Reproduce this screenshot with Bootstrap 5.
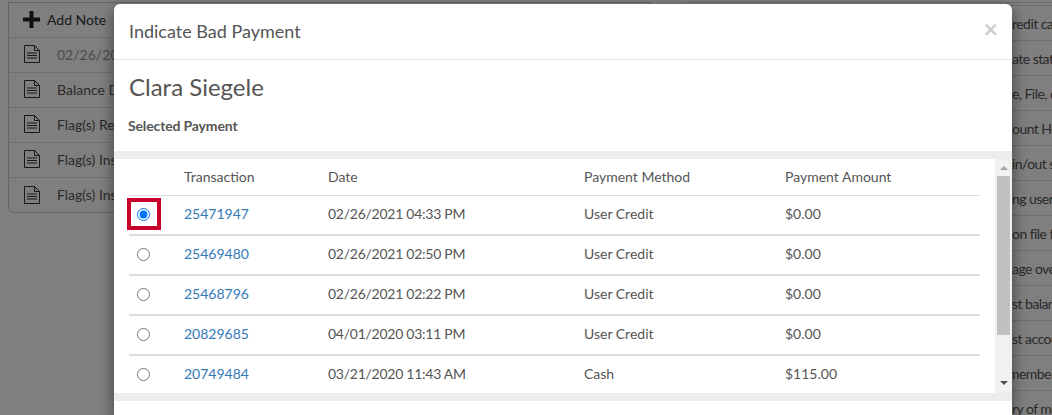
<!DOCTYPE html>
<html lang="en">
<head>
<meta charset="utf-8">
<title>Indicate Bad Payment</title>
<link href="https://cdn.jsdelivr.net/npm/bootstrap@5.3.0/dist/css/bootstrap.min.css" rel="stylesheet">
<style>
html,body{height:415px;overflow:hidden}
body{background:#fff;font-family:"Lato",sans-serif;color:#555;font-size:14px;position:relative}
.page-wrap{height:415px;overflow:hidden}
.note-panel{width:643px;flex:none;height:211px;margin:2px 0 0 8px;border:1px solid #ccc;border-radius:0 0 6px 6px}
.note-row{height:35px;border-bottom:1px solid #ddd;padding-left:15px;padding-bottom:2px;color:#555;font-size:14px;gap:17px}
.note-row:last-child{border-bottom:0}
.note-add{color:#333;gap:7px;padding-left:14px;padding-bottom:1px}
.note-date{color:#999}
.task-panel{margin:2px 0 0 32px;flex:1;border-left:1px solid #ddd;border-top:1px solid #ddd;min-width:0}
.task-first{height:3px;border-bottom:1px solid #ddd}
.task-row{height:35px;border-bottom:1px solid #ddd;color:#555;font-size:14px;letter-spacing:-.55px;white-space:nowrap;overflow:hidden;padding-left:268px}
.hidden-bit{display:inline-block;width:60px;text-align:right;flex:none}
.hidden-long{width:56px}
.backdrop-layer{position:absolute;inset:0;background:#000;opacity:.5}
.dialog-box{position:absolute;left:114px;top:4px;width:898px;bottom:0;background:#fff;border-radius:6px 6px 0 0;box-shadow:0 5px 15px rgba(0,0,0,.5);overflow:hidden}
.dialog-head{height:56px;border-bottom:1px solid #e5e5e5;padding:0 14px 0 15px;color:#555}
.dialog-title{font-size:18px;font-weight:400;margin:0;line-height:22px;padding-bottom:2px}
.dialog-x{font-size:25px;font-weight:700;color:#ccc;line-height:1;padding-bottom:6px}
.client-name{font-size:24px;font-weight:400;margin:0;padding:12px 15px 0;line-height:29px;color:#555}
.sel-label{font-size:14px;font-weight:700;padding:0 14px;margin:16px 0 0;line-height:17px;color:#555;letter-spacing:-.14px}
.scroll-band{margin-top:17px;background:#ececec;padding:8px 0;height:250px}
.scroll-inner{height:234px;background:#fff;overflow:hidden}
.table-side{flex:1;background:#fff;padding:0 15px}
.pay-head{height:37px;border-bottom:1px solid #ddd;color:#555}
.pay-row{height:40px;border-bottom:2px solid #ddd;padding-bottom:2px;color:#555}
.pay-row:last-child{border-bottom-color:transparent}
.c1{width:55px;flex:none}.c2{width:144px;flex:none}.c3{width:256px;flex:none}.c4{width:201px;flex:none}.c5{flex:1}
.c2,.c3,.c4,.c5{padding-bottom:2px}
.date-cell{letter-spacing:-.26px}
.pay-link{color:#337ab7;text-decoration:none}
.pay-radio{appearance:auto;width:13px;height:13px;margin:0;display:block}
.radio-slot{position:relative;width:13px;height:13px;margin-left:8px}
.radio-flag{position:absolute;left:-10px;top:-10px;width:34px;height:32px;border:4px solid #c8002b;pointer-events:none}
.scroll-track{width:17px;background:#f1f1f1;flex:none}
.scroll-thumb{background:#c1c1c1;height:159px;margin:6px 2px 0}
.arrow-up,.arrow-down{width:0;height:0;border-left:4px solid transparent;border-right:4px solid transparent;margin:0 auto}
.arrow-up{border-bottom:4px solid #a3a3a3;margin-top:7px}
.arrow-down{border-top:4px solid #505050;margin-top:auto;margin-bottom:8px}
</style>
</head>
<body>
<div class="page-wrap d-flex">
  <div class="note-panel">
    <div class="note-row note-add d-flex align-items-center">
      <svg width="17" height="17" viewBox="0 0 17 17"><path d="M6.5 0h4v6.5H17v4h-6.5V17h-4v-6.5H0v-4h6.5z" fill="#222"/></svg>
      <span>Add Note</span>
    </div>
    <div class="note-row d-flex align-items-center"><svg width="16" height="18" viewBox="0 0 16 18"><path d="M.5.5h10l5 5v12H.5zM10.5.5v5h5" fill="none" stroke="#333"/><path d="M3 8h10M3 10.5h10M3 13h10" stroke="#333"/></svg><span class="note-date">02/26/2021</span></div>
    <div class="note-row d-flex align-items-center"><svg width="16" height="18" viewBox="0 0 16 18"><path d="M.5.5h10l5 5v12H.5zM10.5.5v5h5" fill="none" stroke="#333"/><path d="M3 8h10M3 10.5h10M3 13h10" stroke="#333"/></svg><span>Balance Due</span></div>
    <div class="note-row d-flex align-items-center"><svg width="16" height="18" viewBox="0 0 16 18"><path d="M.5.5h10l5 5v12H.5zM10.5.5v5h5" fill="none" stroke="#333"/><path d="M3 8h10M3 10.5h10M3 13h10" stroke="#333"/></svg><span>Flag(s) Removed</span></div>
    <div class="note-row d-flex align-items-center"><svg width="16" height="18" viewBox="0 0 16 18"><path d="M.5.5h10l5 5v12H.5zM10.5.5v5h5" fill="none" stroke="#333"/><path d="M3 8h10M3 10.5h10M3 13h10" stroke="#333"/></svg><span>Flag(s) Inserted</span></div>
    <div class="note-row d-flex align-items-center"><svg width="16" height="18" viewBox="0 0 16 18"><path d="M.5.5h10l5 5v12H.5zM10.5.5v5h5" fill="none" stroke="#333"/><path d="M3 8h10M3 10.5h10M3 13h10" stroke="#333"/></svg><span>Flag(s) Inserted</span></div>
  </div>
  <div class="task-panel">
    <div class="task-first"></div>
    <div class="task-row d-flex align-items-center"><span class="hidden-bit">Add c</span><span>redit card</span></div>
    <div class="task-row d-flex align-items-center"><span class="hidden-bit">Upd</span><span>ate statement</span></div>
    <div class="task-row d-flex align-items-center"><span class="hidden-bit">Sav</span><span>e, File, or Print</span></div>
    <div class="task-row d-flex align-items-center"><span class="hidden-bit">Acc</span><span>ount Holder</span></div>
    <div class="task-row d-flex align-items-center"><span class="hidden-bit">Check </span><span>in/out status</span></div>
    <div class="task-row d-flex align-items-center"><span class="hidden-bit">Addi</span><span>ng user</span></div>
    <div class="task-row d-flex align-items-center"><span class="hidden-bit">Card </span><span>on file fee</span></div>
    <div class="task-row d-flex align-items-center"><span class="hidden-bit">Man</span><span>age overdue</span></div>
    <div class="task-row d-flex align-items-center"><span class="hidden-bit">Adju</span><span>st balance</span></div>
    <div class="task-row d-flex align-items-center"><span class="hidden-bit">Adju</span><span>st account</span></div>
    <div class="task-row d-flex align-items-center"><span class="hidden-bit hidden-long">Add </span><span>member</span></div>
    <div class="task-row d-flex align-items-center"><span class="hidden-bit">Histo</span><span>ry of members</span></div>
  </div>
</div>
<div class="backdrop-layer"></div>
<div class="dialog-box">
  <div class="dialog-head d-flex align-items-center justify-content-between">
    <h4 class="dialog-title">Indicate Bad Payment</h4>
    <span class="dialog-x">×</span>
  </div>
  <h3 class="client-name">Clara Siegele</h3>
  <p class="sel-label">Selected Payment</p>
  <div class="scroll-band">
    <div class="scroll-inner d-flex">
      <div class="table-side">
        <div class="pay-head d-flex align-items-center"><div class="c1"></div><div class="c2">Transaction</div><div class="c3">Date</div><div class="c4">Payment Method</div><div class="c5">Payment Amount</div></div>
        <div class="pay-row d-flex align-items-center"><div class="c1"><div class="radio-slot"><input class="pay-radio" type="radio" name="p" checked><span class="radio-flag"></span></div></div><div class="c2"><a class="pay-link" href="#">25471947</a></div><div class="c3 date-cell">02/26/2021 04:33 PM</div><div class="c4">User Credit</div><div class="c5">$0.00</div></div>
        <div class="pay-row d-flex align-items-center"><div class="c1"><div class="radio-slot"><input class="pay-radio" type="radio" name="p"></div></div><div class="c2"><a class="pay-link" href="#">25469480</a></div><div class="c3 date-cell">02/26/2021 02:50 PM</div><div class="c4">User Credit</div><div class="c5">$0.00</div></div>
        <div class="pay-row d-flex align-items-center"><div class="c1"><div class="radio-slot"><input class="pay-radio" type="radio" name="p"></div></div><div class="c2"><a class="pay-link" href="#">25468796</a></div><div class="c3 date-cell">02/26/2021 02:22 PM</div><div class="c4">User Credit</div><div class="c5">$0.00</div></div>
        <div class="pay-row d-flex align-items-center"><div class="c1"><div class="radio-slot"><input class="pay-radio" type="radio" name="p"></div></div><div class="c2"><a class="pay-link" href="#">20829685</a></div><div class="c3 date-cell">04/01/2020 03:11 PM</div><div class="c4">User Credit</div><div class="c5">$0.00</div></div>
        <div class="pay-row d-flex align-items-center"><div class="c1"><div class="radio-slot"><input class="pay-radio" type="radio" name="p"></div></div><div class="c2"><a class="pay-link" href="#">20749484</a></div><div class="c3 date-cell">03/21/2020 11:43 AM</div><div class="c4">Cash</div><div class="c5">$115.00</div></div>
      </div>
      <div class="scroll-track d-flex flex-column">
        <div class="arrow-up"></div>
        <div class="scroll-thumb"></div>
        <div class="arrow-down"></div>
      </div>
    </div>
  </div>
</div>
</body>
</html>
